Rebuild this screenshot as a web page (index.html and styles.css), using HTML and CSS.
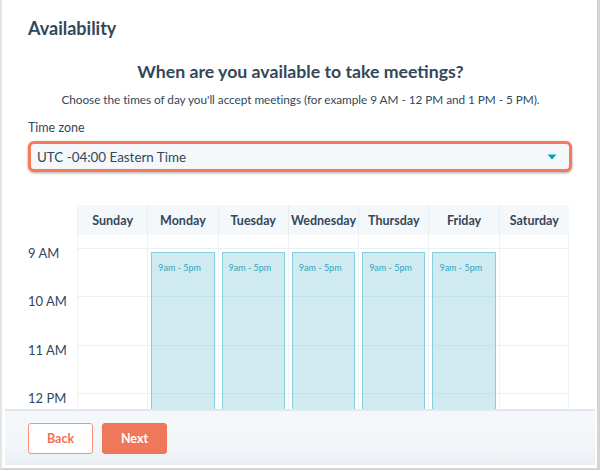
FILE: index.html
```html
<!DOCTYPE html>
<html>
<head>
<meta charset="utf-8">
<link rel="stylesheet" href="styles.css">
</head>
<body>
<div class="window">
  <div class="content">
    <h1 class="title">Availability</h1>
    <h2 class="question">When are you available to take meetings?</h2>
    <p class="hint">Choose the times of day you'll accept meetings (for example 9 AM - 12 PM and 1 PM - 5 PM).</p>
    <div class="label">Time zone</div>
    <div class="select">
      <span class="select-text">UTC -04:00 Eastern Time</span>
      <svg class="caret" width="10" height="6" viewBox="0 0 10 6"><path d="M0.5 0.5 L9.5 0.5 L5 5.5 Z" fill="#00a4bd"/></svg>
    </div>
    <div class="calendar">
      <div class="cal-head">
        <div class="corner"></div>
        <div class="day">Sunday</div>
        <div class="day">Monday</div>
        <div class="day">Tuesday</div>
        <div class="day">Wednesday</div>
        <div class="day">Thursday</div>
        <div class="day">Friday</div>
        <div class="day">Saturday</div>
      </div>
      <div class="cal-body">
        <div class="times">
          <div class="time">9 AM</div>
          <div class="time">10 AM</div>
          <div class="time">11 AM</div>
          <div class="time">12 PM</div>
        </div>
        <div class="col"></div>
        <div class="col"><div class="slot">9am - 5pm</div></div>
        <div class="col"><div class="slot">9am - 5pm</div></div>
        <div class="col"><div class="slot">9am - 5pm</div></div>
        <div class="col"><div class="slot">9am - 5pm</div></div>
        <div class="col"><div class="slot">9am - 5pm</div></div>
        <div class="col"></div>
      </div>
    </div>
  </div>
  <div class="footer">
    <button class="btn btn-back">Back</button>
    <button class="btn btn-next">Next</button>
  </div>
</div>
</body>
</html>
```
FILE: styles.css
```css
* { box-sizing: border-box; }
html, body { margin: 0; padding: 0; background: #fff; }
body {
  font-family: Lato, "Open Sans", sans-serif;
  color: #33475b;
  width: 600px;
  height: 471px;
  overflow: hidden;
}
.window {
  width: 600px;
  height: 470px;
  border-left: 2px solid #e4e4e4;
  border-right: 3px solid #d4d4d4;
  border-bottom: 2px solid #d4d4d4;
  display: flex;
  flex-direction: column;
}
.content {
  height: 409px;
  overflow: hidden;
  padding-left: 26px;
  flex: none;
}
.title {
  margin: 14px 0 0;
  font-size: 18px;
  line-height: 28px;
  font-weight: 700;
}
.question {
  margin: 18px 0 0;
  padding-right: 24px;
  text-align: center;
  font-size: 17.7px;
  line-height: 24px;
  font-weight: 700;
}
.hint {
  margin: 7px 0 0;
  padding-right: 24px;
  text-align: center;
  font-size: 11.8px;
  letter-spacing: -0.05px;
  line-height: 18px;
}
.label {
  margin-top: 11px;
  font-size: 12.5px;
  line-height: 16px;
}
.select {
  margin-top: 5px;
  width: 544px;
  height: 31px;
  border: 3px solid #f7795a;
  border-radius: 6px;
  background: #f5f8fa;
  box-shadow: 0 1px 3px rgba(0,0,0,0.35);
  display: flex;
  align-items: center;
  justify-content: space-between;
  padding: 0 12px 0 6px;
}
.select-text {
  font-size: 13.4px;
  line-height: 20px;
}
.caret { display: block; }
.calendar {
  margin-top: 33px;
}
.cal-head {
  display: grid;
  grid-template-columns: 49px repeat(7, 1fr);
  width: 541px;
  height: 28px;
}
.corner { background: #fff; }
.day {
  background: #f5f8fa;
  border-left: 1px solid #e9eef3;
  font-size: 12.5px;
  font-weight: 700;
  line-height: 28px;
  padding-top: 2px;
  text-align: center;
}
.day:first-of-type { border-left: none; }
.cal-body {
  display: grid;
  grid-template-columns: 49px repeat(7, 1fr);
  width: 541px;
  height: 176px;
}
.times {
  padding-top: 12px;
}
.time {
  height: 48.4px;
  font-size: 13px;
  line-height: 16px;
}
.col {
  border-left: 1px solid #eef2f6;
  background:
    repeating-linear-gradient(to bottom, transparent 0, transparent 15px, #eaf0f6 15px, #eaf0f6 16px, transparent 16px, transparent 48.4px);
  padding: 19px 3px 0 3px;
}
.col:last-child { border-right: 1px solid #eef2f6; }
.slot {
  height: 200px;
  background: rgba(162, 214, 228, 0.5);
  border: 1px solid #86d0de;
  font-size: 9px;
  line-height: 12px;
  color: #2fa7c0;
  padding: 9px 0 0 6px;
}
.footer {
  flex: none;
  margin: 0 2px 2px 3px;
  height: 56px;
  border-top: 2px solid #e3e8ee;
  background: linear-gradient(to bottom, #f5f8fa 0%, #f3f6f9 60%, #eaeff4 100%);
  display: flex;
  align-items: center;
  gap: 9px;
  padding: 0 0 0 23px;
}
.btn {
  width: 65px;
  height: 31px;
  border-radius: 3px;
  font-family: Lato, "Open Sans", sans-serif;
  font-size: 12.5px;
  font-weight: 700;
  cursor: pointer;
}
.btn-back {
  background: #fff;
  border: 1px solid #ff8f73;
  color: #f2714f;
}
.btn-next {
  background: #f0785a;
  border: 1px solid #ec7556;
  color: #fff;
}
```
